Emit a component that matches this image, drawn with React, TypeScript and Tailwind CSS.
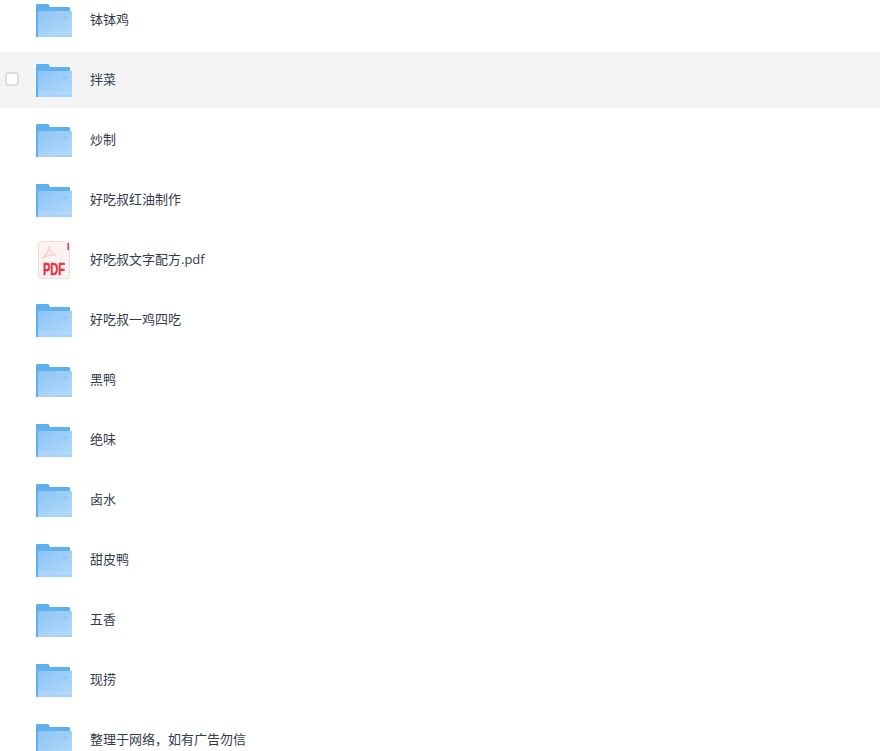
import React from 'react';

const files = [
  { name: '钵钵鸡', type: 'folder' },
  { name: '拌菜', type: 'folder', hover: true },
  { name: '炒制', type: 'folder' },
  { name: '好吃叔红油制作', type: 'folder' },
  { name: '好吃叔文字配方.pdf', type: 'pdf' },
  { name: '好吃叔一鸡四吃', type: 'folder' },
  { name: '黑鸭', type: 'folder' },
  { name: '绝味', type: 'folder' },
  { name: '卤水', type: 'folder' },
  { name: '甜皮鸭', type: 'folder' },
  { name: '五香', type: 'folder' },
  { name: '现捞', type: 'folder' },
  { name: '整理于网络，如有广告勿信', type: 'folder' },
];

const FolderIcon = () => (
  <svg width="36" height="33" viewBox="0 0 36 33" className="shrink-0">
    <defs>
      <linearGradient id="folderFront" x1="0" y1="0" x2="1" y2="1">
        <stop offset="0" stopColor="#8cc4f4" />
        <stop offset="1" stopColor="#b3dafc" />
      </linearGradient>
    </defs>
    <path d="M0 1a1 1 0 0 1 1-1h11.500l1.500 3h19a1 1 0 0 1 1 1v3H2v26H0z" fill="#5fb0ee" />
    <path d="M2 7h34v26H2z" fill="url(#folderFront)" />
    <path d="M2 31h34v2H2z" fill="#a3d2fa" />
    <path d="M2 27h34v4H2z" fill="#b4dbfc" opacity="0.45" />
    <path d="M27 12h5v1h-5zM27 14h5v1h-5z" fill="#81c1f5" />
  </svg>
);

const PdfIcon = () => (
  <svg width="32" height="38" viewBox="0 0 32 38" className="shrink-0">
    <path d="M2.500 0.500h24.500l4.500 4.500v30.500a2 2 0 0 1-2 2h-27a2 2 0 0 1-2-2v-33a2 2 0 0 1 2-2z" fill="#fdf2f2" stroke="#f8d9d9" />
    <rect x="29.500" y="2" width="1.500" height="7" fill="#e0343f" />
    <path
      d="M11.500 4.500c-1 4 2 8 6.500 9.500c-5-.5-9 .5-14 3c3-2 6-6 7-9.500"
      fill="none"
      stroke="#f6cfcf"
      strokeWidth="1.400"
    />
    <g transform="translate(5 34) scale(0.67 1)">
      <text
        fontFamily="'Liberation Sans', sans-serif"
        fontSize="16.500"
        fontWeight="700"
        fill="#e5343f"
        stroke="#e5343f"
        strokeWidth="0.500"
      >
        PDF
      </text>
    </g>
  </svg>
);

export default function App() {
  return (
    <div className="h-[751px] overflow-hidden bg-white">
      <ul className="-mt-2 font-['Open_Sans','Noto_Sans_CJK_SC',sans-serif] text-[13px] text-[#333b4a]">
        {files.map((file) => (
          <li
            key={file.name}
            className={`flex h-14 items-center mb-1 ${file.hover ? 'bg-[#f4f4f4]' : ''}`}
          >
            <span className="flex w-9 shrink-0 pl-[5px]">
              {file.hover && (
                <span className="-mt-0.5 h-[14px] w-[14px] rounded-[3px] border-2 border-[#dedede] bg-white" />
              )}
            </span>
            <span className="flex w-[54px] shrink-0">
              {file.type === 'pdf' ? (
                <span className="pl-0.5">
                  <PdfIcon />
                </span>
              ) : (
                <FolderIcon />
              )}
            </span>
            <span className="whitespace-nowrap">{file.name}</span>
          </li>
        ))}
      </ul>
    </div>
  );
}
